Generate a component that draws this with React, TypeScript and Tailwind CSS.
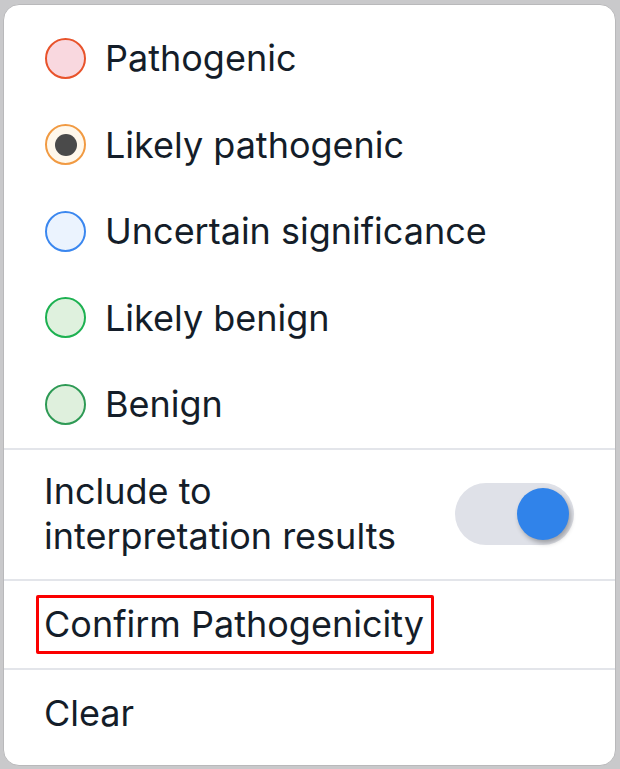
import { useState } from 'react';

const options = [
  { label: 'Pathogenic', ring: 'border-[#e8532b]', fill: 'bg-[#f9d8df]' },
  { label: 'Likely pathogenic', ring: 'border-[#f19a42]', fill: 'bg-[#fff8ec]' },
  { label: 'Uncertain significance', ring: 'border-[#3b87ef]', fill: 'bg-[#ebf3fe]' },
  { label: 'Likely benign', ring: 'border-[#1db151]', fill: 'bg-[#dff1de]' },
  { label: 'Benign', ring: 'border-[#2e9a55]', fill: 'bg-[#dff0dd]' },
];

export default function App() {
  const [selected, setSelected] = useState('Likely pathogenic');
  const [include, setInclude] = useState(true);

  return (
    <div className="w-[620px] h-[769px] bg-[#c9c9cb] pl-[3px] pt-[4px] font-['Inter',sans-serif] text-[#141d29]">
      <div className="w-[613px] h-[762px] bg-white rounded-[16px] border border-[#b9b9bb] flex flex-col overflow-hidden">
        <div className="pt-[10px] flex flex-col">
          {options.map((o) => (
            <button
              key={o.label}
              className="h-[86.5px] flex items-center pl-[41px] gap-[19px] text-left"
              onClick={() => setSelected(o.label)}
            >
              <span
                className={`w-[41px] h-[41px] rounded-full border-[2.5px] flex items-center justify-center ${o.ring} ${o.fill}`}
              >
                {selected === o.label && <span className="w-[22px] h-[22px] rounded-full bg-[#4a4a4a]" />}
              </span>
              <span className="text-[36px] leading-none">{o.label}</span>
            </button>
          ))}
        </div>

        <div className="border-t-2 border-[#e3e5ea] h-[131px] flex items-center justify-between pl-[40px] pr-[41px]">
          <div className="text-[36px] leading-[45px]">
            Include to
            <br />
            interpretation results
          </div>
          <button
            className="w-[119px] h-[62px] rounded-full bg-[#dfe1e8] flex items-center px-[5px]"
            onClick={() => setInclude(!include)}
          >
            <span
              className={`w-[52px] h-[52px] rounded-full shadow-[2px_3px_5px_rgba(0,0,0,0.3)] ${
                include ? 'bg-[#3083ea] ml-auto' : 'bg-white'
              }`}
            />
          </button>
        </div>

        <div className="border-t-2 border-[#e3e5ea] h-[89px] flex items-center pl-[32px]">
          <button className="h-[59px] border-[3px] border-[#fb0000] rounded-[2px] pl-[5px] pr-[7px] text-[36px] leading-none">
            Confirm Pathogenicity
          </button>
        </div>

        <div className="border-t-2 border-[#e3e5ea] pt-[25px] pl-[40px]">
          <button className="text-[36px] leading-[36px]">Clear</button>
        </div>
      </div>
    </div>
  );
}
